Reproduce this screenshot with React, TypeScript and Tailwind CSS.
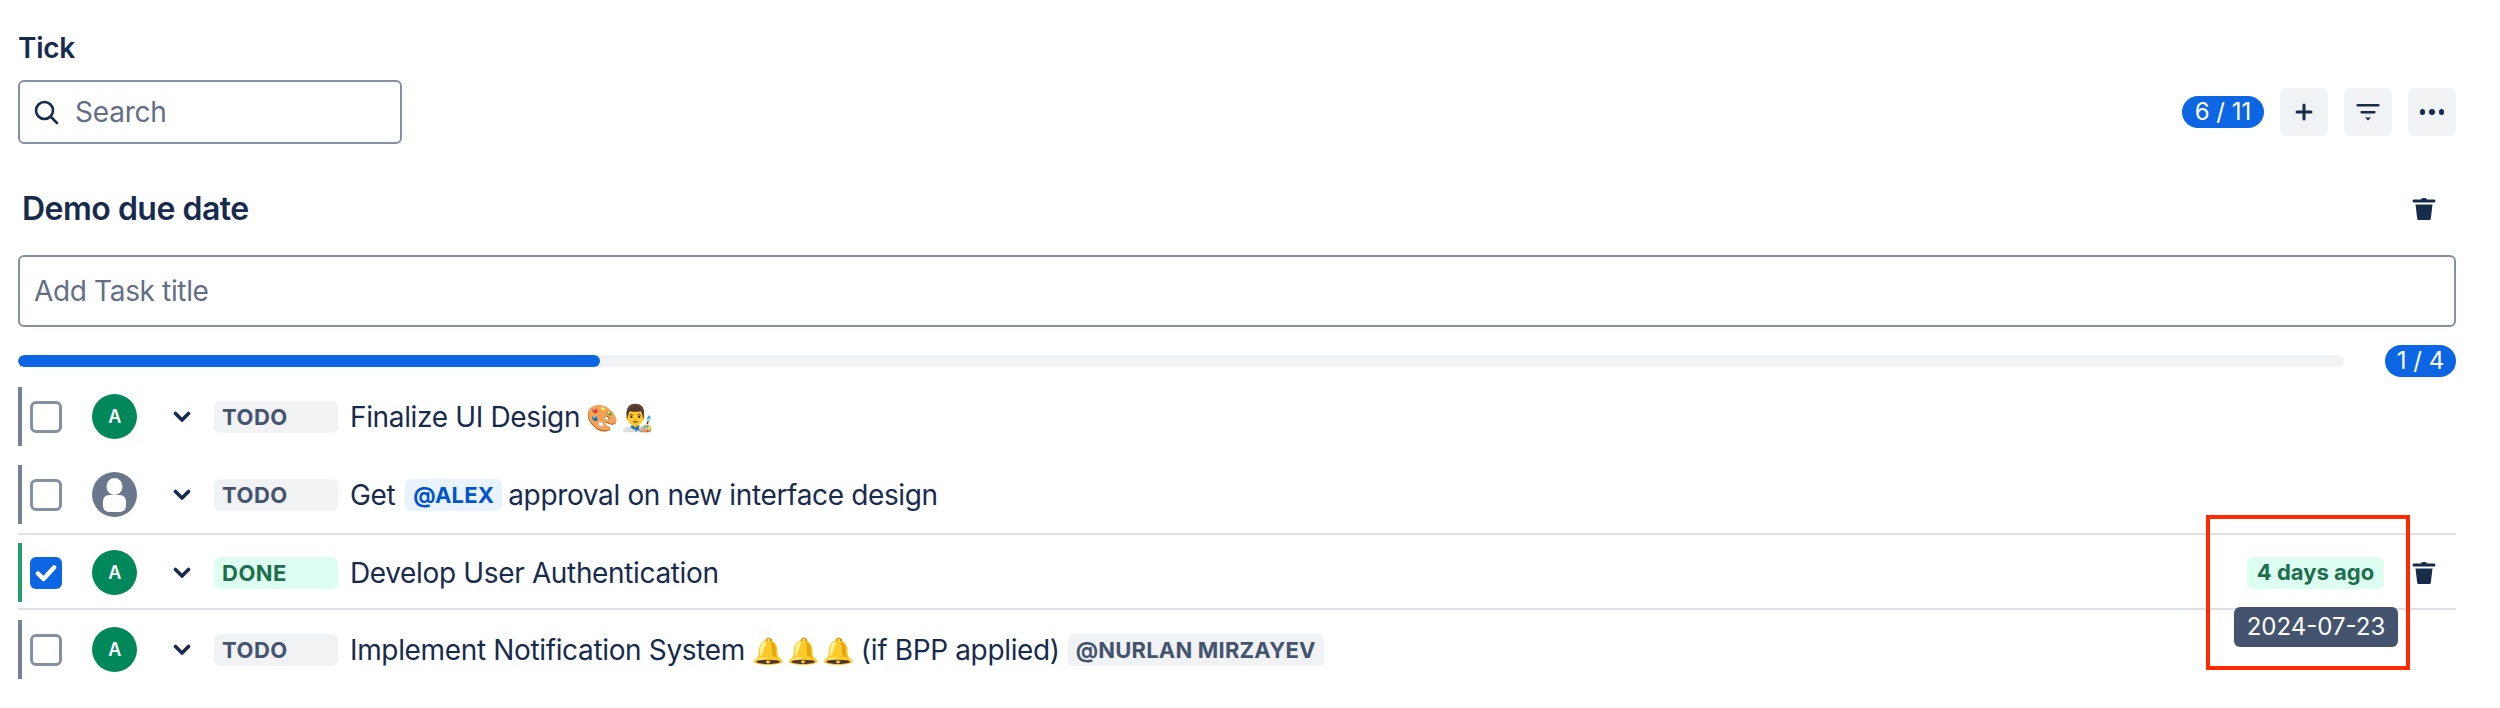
import React from 'react';

const ink = '#172B4D';

function TrashIcon() {
  return (
    <svg width="24" height="24" viewBox="0 0 24 24" fill={ink}>
      <path d="M9 2.500c.3-1 1.200-1.500 3-1.500s2.700.5 3 1.500h7a1.500 1.500 0 0 1 0 3H2a1.500 1.500 0 0 1 0-3h7Z" />
      <path d="M3.500 7.500h17l-1.700 14c-.1 1-.8 1.500-1.700 1.500H6.900c-.9 0-1.600-.5-1.700-1.500l-1.700-14Z" />
    </svg>);

}

function Chevron() {
  return (
    <svg width="18" height="12" viewBox="0 0 18 12" fill="none" stroke={ink} strokeWidth="3.600" strokeLinecap="round" strokeLinejoin="round">
      <path d="M2.500 2.500L9 9l6.500-6.500" />
    </svg>);

}

function Avatar({ person }: { person?: boolean }) {
  if (person) {
    return (
      <svg width="45" height="45" viewBox="0 0 45 45" className="shrink-0">
        <circle cx="22.500" cy="22.500" r="22.500" fill="#6B778C" />
        <ellipse cx="22.500" cy="14.500" rx="8" ry="8.500" fill="#fff" />
        <rect x="11" y="23" width="23" height="17" rx="6" fill="#fff" />
      </svg>);

  }
  return (
    <div className="w-[45px] h-[45px] rounded-full bg-[#00875A] text-white text-[18px] font-semibold flex items-center justify-center shrink-0">
      A
    </div>);

}

function Checkbox({ checked }: { checked?: boolean }) {
  if (checked) {
    return (
      <div className="w-8 h-8 rounded-[6px] bg-[#0C66E4] flex items-center justify-center shrink-0">
        <svg width="22" height="18" viewBox="0 0 22 18" fill="none" stroke="#fff" strokeWidth="4.500" strokeLinecap="round" strokeLinejoin="round">
          <path d="M3 9.500l5.500 5.500L19 3.500" />
        </svg>
      </div>);

  }
  return <div className="w-8 h-8 rounded-[6px] border-[3px] border-[#8590A2] bg-white shrink-0" />;
}

function Status({ done }: { done?: boolean }) {
  return (
    <div className={`w-[124px] h-8 rounded-[6px] pl-2 pt-[2px] flex items-center text-[22px] font-bold tracking-[0.5px] shrink-0 ${done ? 'bg-[#DCFFF1] text-[#216E4E]' : 'bg-[#F1F2F4] text-[#44546F]'}`}>
      {done ? 'DONE' : 'TODO'}
    </div>);

}

function Row({ bar, children }: { bar: string; children: React.ReactNode }) {
  return (
    <div className="relative flex items-center h-[59px] pr-5">
      <div className={`w-1 h-full shrink-0 ${bar}`} />
      {children}
    </div>);

}

function Lead({ person, checked, done }: { person?: boolean; checked?: boolean; done?: boolean }) {
  return (
    <>
      <div className="ml-2 mr-[30px]">
        <Checkbox checked={checked} />
      </div>
      <Avatar person={person} />
      <div className="ml-[36px] mr-[23px]">
        <Chevron />
      </div>
      <Status done={done} />
    </>);

}

export default function App() {
  return (
    <div className="w-[2500px] h-[708px] bg-white overflow-hidden relative pl-[18px] pr-[44px] pt-[32px] text-[#172B4D] font-['Inter',sans-serif]">
      <div className="text-[28px] leading-[32px] font-semibold tracking-[-0.3px]">Tick</div>

      <div className="mt-4 flex items-center justify-between">
        <div className="w-[384px] h-16 rounded-[6px] border-2 border-[#8590A2] flex items-center pl-[12px]">
          <svg width="28" height="28" viewBox="0 0 28 28" fill="none" stroke={ink} strokeWidth="2.600" strokeLinecap="round">
            <circle cx="12.500" cy="12.500" r="8.500" />
            <path d="M19 19l6 6" />
          </svg>
          <span className="ml-[15px] text-[28px] tracking-[-0.2px] text-[#626F86]">Search</span>
        </div>
        <div className="flex items-center">
          <div className="mr-4 h-8 w-[82px] rounded-full bg-[#0C66E4] text-white text-[24px] flex items-center justify-center">6 / 11</div>
          <div className="flex gap-4">
            <div className="w-12 h-12 rounded-[8px] bg-[#F1F2F4] flex items-center justify-center">
              <svg width="18" height="18" viewBox="0 0 18 18" stroke={ink} strokeWidth="3" strokeLinecap="round">
                <path d="M9 2v14M2 9h14" />
              </svg>
            </div>
            <div className="w-12 h-12 rounded-[8px] bg-[#F1F2F4] flex items-center justify-center">
              <svg width="24" height="18" viewBox="0 0 24 18" fill={ink}>
                <rect x="0.500" y="1" width="23" height="2.600" rx="1" />
                <rect x="4.500" y="8" width="15" height="2.600" rx="1" />
                <path d="M9 14.500h6l-3 3z" />
              </svg>
            </div>
            <div className="w-12 h-12 rounded-[8px] bg-[#F1F2F4] flex items-center justify-center gap-[4px]">
              <div className="w-[5.500px] h-[5.500px] rounded-full bg-[#172B4D]" />
              <div className="w-[5.500px] h-[5.500px] rounded-full bg-[#172B4D]" />
              <div className="w-[5.500px] h-[5.500px] rounded-full bg-[#172B4D]" />
            </div>
          </div>
        </div>
      </div>

      <div className="mt-[44px] flex items-center justify-between pl-[4px] pr-[20px] h-[42px]">
        <div className="text-[32px] font-semibold tracking-[-0.5px]">Demo due date</div>
        <TrashIcon />
      </div>

      <div className="mt-[25px] h-[72px] rounded-[6px] border-2 border-[#8590A2] flex items-center pl-[14px] text-[28px] tracking-[-0.35px] text-[#626F86]">
        Add Task title
      </div>

      <div className="mt-[18px] flex items-center justify-between h-8">
        <div className="w-[2326px] h-3 rounded-full bg-[#F1F2F4] overflow-hidden">
          <div className="h-full w-1/4 rounded-full bg-[#0C66E4]" />
        </div>
        <div className="w-[71px] h-8 rounded-full bg-[#0C66E4] text-white text-[24px] flex items-center justify-center">1 / 4</div>
      </div>

      <div className="mt-[10px] text-[28px] tracking-[-0.35px]">
        <Row bar="bg-[#758195]">
          <Lead />
          <span className="ml-3">Finalize UI Design <span className="-ml-[2px] text-[26px] [word-spacing:-3px]">🎨 👨‍🎨</span></span>
        </Row>

        <div className="h-[19px]" />

        <Row bar="bg-[#758195]">
          <Lead person />
          <span className="ml-3">Get</span>
          <span className="ml-[10px] h-8 px-2 pt-[2px] rounded-[6px] bg-[#E9F2FF] text-[#0055CC] text-[22px] font-bold tracking-[0.2px] flex items-center">@ALEX</span>
          <span className="ml-[6px]">approval on new interface design</span>
        </Row>

        <div className="h-[11px] border-b-2 border-[#DFE1E6]" />
        <div className="h-[8px]" />

        <Row bar="bg-[#22A06B]">
          <Lead checked done />
          <span className="ml-3">Develop User Authentication</span>
          <span className="ml-auto mr-[28px] h-8 w-[137px] rounded-[6px] bg-[#DCFFF1] text-[#216E4E] text-[22px] font-bold tracking-normal flex items-center justify-center">4 days ago</span>
          <TrashIcon />
        </Row>

        <div className="h-[8px] border-b-2 border-[#DFE1E6]" />
        <div className="h-[10px]" />

        <Row bar="bg-[#758195]">
          <Lead />
          <span className="ml-3">Implement Notification System <span className="text-[26px] [word-spacing:-4px]">🔔 🔔 🔔</span> (if BPP applied)</span>
          <span className="ml-2 h-8 px-2 pt-[2px] rounded-[6px] bg-[#F1F2F4] text-[#44546F] text-[22px] font-bold tracking-[0.2px] flex items-center">@NURLAN MIRZAYEV</span>
        </Row>
      </div>

      {/* tooltip and the annotation box sit over the rows */}
      <div className="absolute left-[2234px] top-[607px] w-[164px] h-10 rounded-[6px] bg-[#44546F] text-white text-[24px] flex items-center justify-center">
        2024-07-23
      </div>
      <div className="absolute left-[2206px] top-[515px] w-[204px] h-[155px] border-4 border-[#FF2A00]" />
    </div>);

}
